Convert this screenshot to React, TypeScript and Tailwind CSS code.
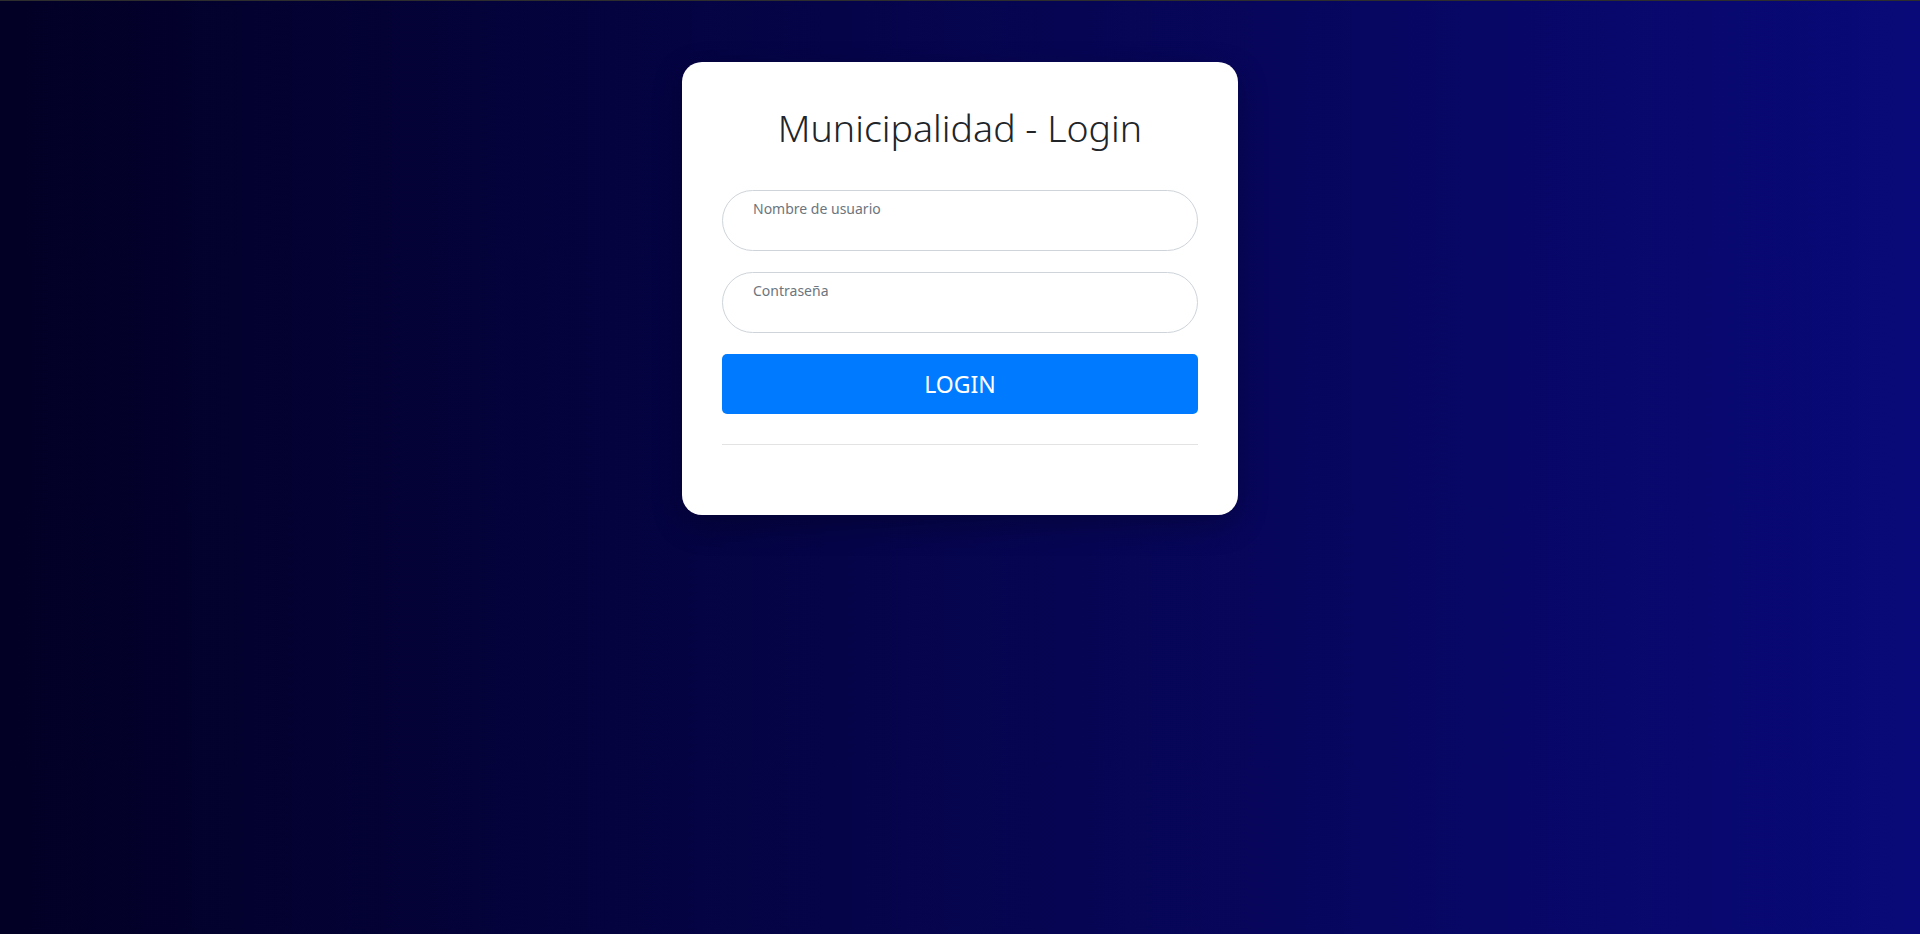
import React from "react";

export default function App() {
  return (
    <div
      className="min-h-[934px] w-full border-t border-[#2e2e2e] bg-[linear-gradient(90deg,#020024_0%,#090979_100%)] flex justify-center"
      style={{ fontFamily: '"Noto Sans", "Open Sans", sans-serif' }}
    >
      <div className="mt-[61px] h-[453px] w-[556px] rounded-[20px] bg-white px-10 pt-[36px] shadow-[0_10px_30px_rgba(0,0,0,0.25)]">
        <h1 className="text-center text-[37.5px] font-light leading-[60px] text-[#212529]">
          Municipalidad - Login
        </h1>
        <div className="mt-[32px] flex flex-col gap-[21px]">
          <div className="relative h-[61px] rounded-full border border-[#ced4da] bg-white">
            <span className="absolute left-[30px] top-[7px] text-[14px] text-[#6c757d]">
              Nombre de usuario
            </span>
          </div>
          <div className="relative h-[61px] rounded-full border border-[#ced4da] bg-white">
            <span className="absolute left-[30px] top-[7px] text-[14px] text-[#6c757d]">
              Contraseña
            </span>
          </div>
        </div>
        <button className="mt-[21px] flex h-[60px] w-full items-center justify-center rounded-[5px] bg-[#007bff] text-[23px] text-white">
          LOGIN
        </button>
        <div className="mt-[30px] h-px w-full bg-[#e3e3e3]" />
      </div>
    </div>
  );
}
